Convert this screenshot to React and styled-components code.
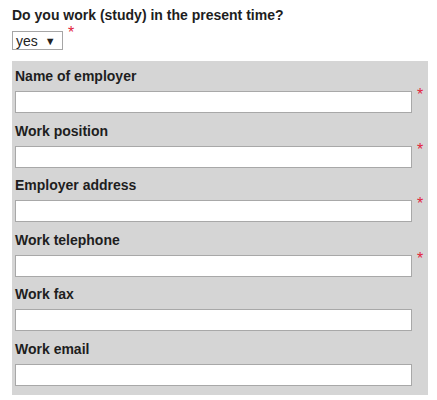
import React from "react";
import styled, {createGlobalStyle} from 'styled-components';

const GlobalStyle = createGlobalStyle`
    body {
        margin: 0;
        background: #ffffff;
        font-family: "Liberation Sans", Arial, sans-serif;
        color: #1e1e1e;
    }
`;

const Page = styled.div`
    padding: 7px 9px 0 12px;
    width: 416px;
`;

const Question = styled.h3`
    margin: 0;
    font-size: 14px;
    font-weight: bold;
    line-height: 16px;
`;

const SelectRow = styled.div`
    display: flex;
    align-items: flex-start;
    margin-top: 7px;
`;

const SelectBox = styled.div`
    display: flex;
    align-items: center;
    box-sizing: border-box;
    width: 51px;
    height: 19px;
    margin-top: 1px;
    padding-left: 3px;
    border: 1px solid #a6a6a6;
    background: #ffffff;
    font-size: 14px;
    color: #222;
`;

const Arrow = styled.span`
    font-size: 11px;
    margin-left: 7px;
    margin-top: 1px;
`;

const Required = styled.span`
    color: #e2263c;
    font-size: 16px;
    line-height: 10px;
    margin-left: ${({$gap}) => $gap}px;
    margin-top: ${({$top}) => $top}px;
`;

const Panel = styled.div`
    margin-top: 11px;
    background-color: #d5d5d5;
    padding: 7px 0 9px 3px;
`;

const Field = styled.div`
    margin-bottom: 9.5px;
    &:last-child {
        margin-bottom: 0;
    }
`;

const FieldLabel = styled.div`
    font-size: 14px;
    font-weight: bold;
    line-height: 16px;
    margin-bottom: 7px;
`;

const InputRow = styled.div`
    display: flex;
    align-items: flex-start;
`;

const TextInput = styled.input`
    box-sizing: border-box;
    width: 397px;
    height: 22px;
    margin: 0;
    border: 1px solid #a8a8a8;
    background: #ffffff;
    outline: none;
`;

const fields = [
    {label: 'Name of employer', required: true},
    {label: 'Work position', required: true},
    {label: 'Employer address', required: true},
    {label: 'Work telephone', required: true},
    {label: 'Work fax', required: false},
    {label: 'Work email', required: false},
];

export default function App() {
    return (
        <>
            <GlobalStyle/>
            <Page>
                <Question>Do you work (study) in the present time?</Question>
                <SelectRow>
                    <SelectBox>yes<Arrow>▼</Arrow></SelectBox>
                    <Required $gap={5} $top={-2}>*</Required>
                </SelectRow>
                <Panel>
                    {fields.map(f => (
                        <Field key={f.label}>
                            <FieldLabel>{f.label}</FieldLabel>
                            <InputRow>
                                <TextInput type='text'/>
                                {f.required && <Required $gap={5} $top={-1}>*</Required>}
                            </InputRow>
                        </Field>
                    ))}
                </Panel>
            </Page>
        </>
    );
}
